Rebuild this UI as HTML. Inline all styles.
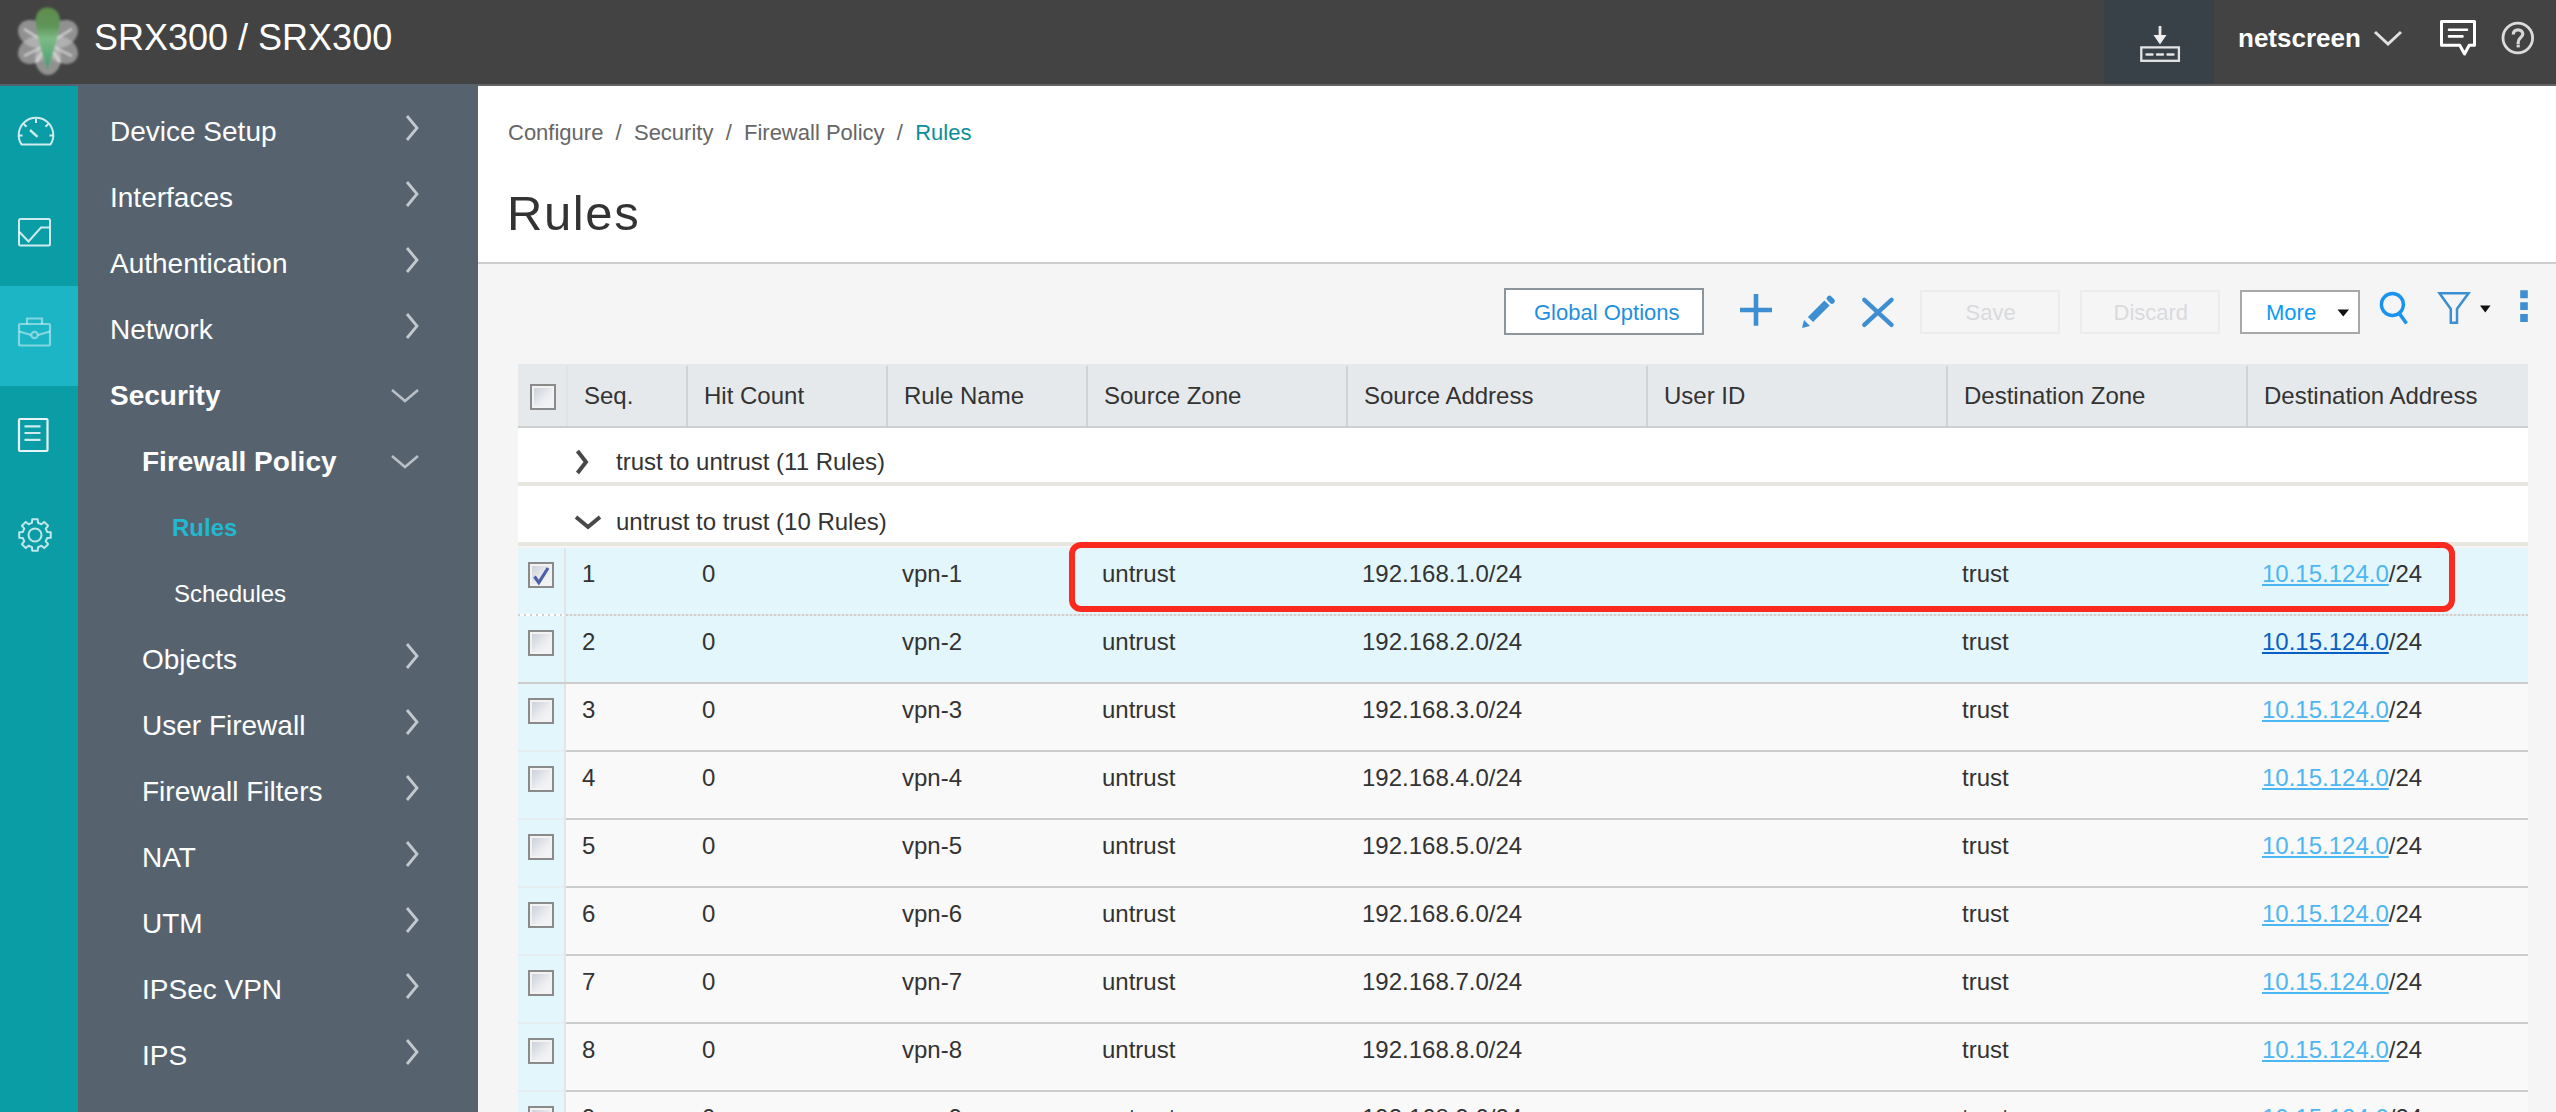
<!DOCTYPE html>
<html><head><meta charset="utf-8"><style>
*{box-sizing:border-box;margin:0;padding:0}
html,body{width:2556px;height:1112px;overflow:hidden;background:#f5f5f5;font-family:"Liberation Sans",sans-serif;color:#333}
.a{position:absolute;white-space:nowrap;line-height:1}
#hdr{position:absolute;left:0;top:0;width:2556px;height:84px;background:#434343}
#side{position:absolute;left:0;top:84px;width:478px;height:1028px;background:#56636f}
#rail{position:absolute;left:0;top:86px;width:78px;height:1026px;background:#0a9da6}
#nav{position:absolute;left:78px;top:99px;width:400px}
#nav .it{position:relative;height:66px;line-height:66px;font-size:28px;color:#fff;white-space:nowrap}
#nav .chev{position:absolute;left:328px;top:16px}
#topw{position:absolute;left:478px;top:84px;width:2078px;height:180px;background:#fff;border-top:2px solid #646464;border-bottom:2px solid #cfcfcf}
#tbl{position:absolute;left:518px;top:364px;width:2010px;height:748px;overflow:hidden}
.hd{position:absolute;left:0;top:0;width:2010px;height:64px;background:#e6e9eb;border-bottom:2px solid #cdcece}
.hd .dv{position:absolute;top:2px;width:2px;height:60px;background:#d0d3d5}
.cell{position:absolute;font-size:24px;line-height:1;white-space:nowrap;color:#333}
.grp{position:absolute;left:0;width:2010px;background:#fff;border-bottom:4px solid #e7e7e0}
.row{position:absolute;left:0;width:2010px;height:68px;background:#f9f9f9}
.row .bd{position:absolute;left:48px;right:0;bottom:0;height:2px;background:#cdcdcd}
.row .cbc{position:absolute;left:0;top:0;width:46px;height:68px;background:#e3f6fc}
.row .cdv{position:absolute;left:46px;top:0;width:2px;height:68px;background:#e2e5e6}
.row.sel{background:#e3f6fc}
.cb{position:absolute;width:26px;height:26px;border:2px solid #8a8a8a;background:linear-gradient(135deg,#c6ccd5 0%,#eceef1 60%,#f6f6f6 100%);box-shadow:inset 0 0 0 2px #f2f2f2}
.lnk{color:#4cb6f3;text-decoration:underline;text-decoration-thickness:2px;text-underline-offset:2px}
</style></head><body>
<div id="hdr">
<svg style="position:absolute;left:0;top:0" width="96" height="84" viewBox="0 0 96 84">
<defs>
<linearGradient id="lg" x1="0" y1="0" x2="0" y2="1"><stop offset="0" stop-color="#5e8c4c"/><stop offset="0.3" stop-color="#5f9459"/><stop offset="0.5" stop-color="#7dba86"/><stop offset="0.8" stop-color="#5aa878"/><stop offset="1" stop-color="#3f9a6a"/></linearGradient>
<filter id="bl"><feGaussianBlur stdDeviation="0.8"/></filter>
</defs>
<g filter="url(#bl)">
<g fill="#c4c4c4" fill-opacity="0.6">
<ellipse cx="48" cy="58" rx="13" ry="17"/>
<ellipse cx="48" cy="58" rx="13" ry="17" transform="rotate(60 48 42)"/>
<ellipse cx="48" cy="58" rx="13" ry="17" transform="rotate(120 48 42)"/>
<ellipse cx="48" cy="58" rx="13" ry="17" transform="rotate(-60 48 42)"/>
<ellipse cx="48" cy="58" rx="13" ry="17" transform="rotate(-120 48 42)"/>
</g>
<g stroke="#e6e6e6" stroke-opacity="0.7" stroke-width="2.5" fill="none">
<path d="M24 29 L48 44 L24 56"/><path d="M72 29 L48 44 L72 56"/>
<path d="M36 62 L48 44 L60 62"/>
</g>
<path d="M47.5 7.5 C55 7.5 60 13 60 21 C60 33 52 57 47.5 70 C43 57 35.5 33 35.5 21 C35.5 13 40 7.5 47.5 7.5 Z" fill="url(#lg)"/>
</g></svg>
<div class="a" style="left:94px;top:20px;font-size:36px;color:#fff">SRX300 / SRX300</div>

<div style="position:absolute;left:2104px;top:0;width:110px;height:84px;background:#374147"></div>
<svg style="position:absolute;left:2130px;top:20px" width="60" height="50" viewBox="2130 20 60 50">
<path d="M2160 26 L2160 40" stroke="#e8e8e8" stroke-width="2.8"/>
<path d="M2153.5 35 L2160 44.5 L2166.5 35 Z" fill="#f0f0f0"/>
<rect x="2141.3" y="47.4" width="37.6" height="13.4" fill="none" stroke="#e4e4e4" stroke-width="2.3"/>
<path d="M2146.5 54.5 H2152.5 M2157 54.5 H2163 M2167.5 54.5 H2173.5" stroke="#e4e4e4" stroke-width="2.4" stroke-linecap="round"/>
</svg>
<div class="a" style="left:2238px;top:25px;font-size:26px;font-weight:bold;color:#fff">netscreen</div>
<svg style="position:absolute;left:2370px;top:26px" width="36" height="24" viewBox="2370 26 36 24"><path d="M2375 32 L2388 44 L2401 32" fill="none" stroke="#e0e0e0" stroke-width="3"/></svg>
<svg style="position:absolute;left:2436px;top:16px" width="44" height="44" viewBox="2436 16 44 44">
<path d="M2441.5 21.6 H2474.5 V45.2 H2469.2 L2464.5 54 L2459.8 45.2 H2441.5 Z" fill="none" stroke="#fff" stroke-width="3" stroke-linejoin="round"/>
<path d="M2449 29.8 H2467 M2449 36.4 H2462.5" stroke="#fff" stroke-width="2.6" stroke-linecap="round"/>
</svg>
<svg style="position:absolute;left:2498px;top:18px" width="40" height="40" viewBox="2498 18 40 40">
<circle cx="2517.8" cy="38" r="14.8" fill="none" stroke="#dcdcdc" stroke-width="2.8"/>
<path d="M2513.3 34.5 C2513.3 31.5 2515.3 29.8 2518 29.8 C2520.8 29.8 2522.8 31.6 2522.8 34 C2522.8 37.2 2518.2 38 2518.2 42.5 V44" fill="none" stroke="#d8d8d8" stroke-width="3.2"/>
<rect x="2516.6" y="44.6" width="3.2" height="2.8" fill="#d8d8d8"/>
</svg>

</div>
<div id="side"></div>
<div id="rail"><div style="position:absolute;left:0;top:200px;width:78px;height:100px;background:#1cb5c5"></div></div>
<div id="nav">
<div class="it" style="padding-left:32px;font-size:28px;color:#fff;">Device Setup<svg class="chev" style="left:326px;top:14.5px" width="16" height="28" viewBox="0 0 16 28"><path d="M3 2 L13 14 L3 26" fill="none" stroke="#c3c8cd" stroke-width="2.8"/></svg></div>
<div class="it" style="padding-left:32px;font-size:28px;color:#fff;">Interfaces<svg class="chev" style="left:326px;top:14.5px" width="16" height="28" viewBox="0 0 16 28"><path d="M3 2 L13 14 L3 26" fill="none" stroke="#c3c8cd" stroke-width="2.8"/></svg></div>
<div class="it" style="padding-left:32px;font-size:28px;color:#fff;">Authentication<svg class="chev" style="left:326px;top:14.5px" width="16" height="28" viewBox="0 0 16 28"><path d="M3 2 L13 14 L3 26" fill="none" stroke="#c3c8cd" stroke-width="2.8"/></svg></div>
<div class="it" style="padding-left:32px;font-size:28px;color:#fff;">Network<svg class="chev" style="left:326px;top:14.5px" width="16" height="28" viewBox="0 0 16 28"><path d="M3 2 L13 14 L3 26" fill="none" stroke="#c3c8cd" stroke-width="2.8"/></svg></div>
<div class="it" style="padding-left:32px;font-size:28px;color:#fff;font-weight:bold;">Security<svg class="chev" style="left:312px;top:24px" width="30" height="16" viewBox="0 0 30 16"><path d="M2 3 L15 14 L28 3" fill="none" stroke="#b9bfc5" stroke-width="2.6"/></svg></div>
<div class="it" style="padding-left:64px;font-size:28px;color:#fff;font-weight:bold;">Firewall Policy<svg class="chev" style="left:312px;top:24px" width="30" height="16" viewBox="0 0 30 16"><path d="M2 3 L15 14 L28 3" fill="none" stroke="#b9bfc5" stroke-width="2.6"/></svg></div>
<div class="it" style="padding-left:94px;font-size:24px;color:#22b8cf;font-weight:bold;">Rules</div>
<div class="it" style="padding-left:96px;font-size:24px;color:#fff;">Schedules</div>
<div class="it" style="padding-left:64px;font-size:28px;color:#fff;">Objects<svg class="chev" style="left:326px;top:14.5px" width="16" height="28" viewBox="0 0 16 28"><path d="M3 2 L13 14 L3 26" fill="none" stroke="#c3c8cd" stroke-width="2.8"/></svg></div>
<div class="it" style="padding-left:64px;font-size:28px;color:#fff;">User Firewall<svg class="chev" style="left:326px;top:14.5px" width="16" height="28" viewBox="0 0 16 28"><path d="M3 2 L13 14 L3 26" fill="none" stroke="#c3c8cd" stroke-width="2.8"/></svg></div>
<div class="it" style="padding-left:64px;font-size:28px;color:#fff;">Firewall Filters<svg class="chev" style="left:326px;top:14.5px" width="16" height="28" viewBox="0 0 16 28"><path d="M3 2 L13 14 L3 26" fill="none" stroke="#c3c8cd" stroke-width="2.8"/></svg></div>
<div class="it" style="padding-left:64px;font-size:28px;color:#fff;">NAT<svg class="chev" style="left:326px;top:14.5px" width="16" height="28" viewBox="0 0 16 28"><path d="M3 2 L13 14 L3 26" fill="none" stroke="#c3c8cd" stroke-width="2.8"/></svg></div>
<div class="it" style="padding-left:64px;font-size:28px;color:#fff;">UTM<svg class="chev" style="left:326px;top:14.5px" width="16" height="28" viewBox="0 0 16 28"><path d="M3 2 L13 14 L3 26" fill="none" stroke="#c3c8cd" stroke-width="2.8"/></svg></div>
<div class="it" style="padding-left:64px;font-size:28px;color:#fff;">IPSec VPN<svg class="chev" style="left:326px;top:14.5px" width="16" height="28" viewBox="0 0 16 28"><path d="M3 2 L13 14 L3 26" fill="none" stroke="#c3c8cd" stroke-width="2.8"/></svg></div>
<div class="it" style="padding-left:64px;font-size:28px;color:#fff;">IPS<svg class="chev" style="left:326px;top:14.5px" width="16" height="28" viewBox="0 0 16 28"><path d="M3 2 L13 14 L3 26" fill="none" stroke="#c3c8cd" stroke-width="2.8"/></svg></div>
<div class="it" style="padding-left:64px;font-size:28px;color:#fff;">ALG</div>
</div>
<div id="topw"></div>
<div class="a" style="left:508px;top:122px;font-size:22px;color:#666;white-space:pre">Configure  /  Security  /  Firewall Policy  /  <span style="color:#0b8e99">Rules</span></div>
<div class="a" style="left:507px;top:189px;font-size:49px;letter-spacing:1.6px;color:#333">Rules</div>
<div id="tbl">
<div class="hd">
<div class="dv" style="left:48px;background:#e1e4e6"></div>
<div class="dv" style="left:168px"></div>
<div class="dv" style="left:368px"></div>
<div class="dv" style="left:568px"></div>
<div class="dv" style="left:828px"></div>
<div class="dv" style="left:1128px"></div>
<div class="dv" style="left:1428px"></div>
<div class="dv" style="left:1728px"></div>
<div class="cell" style="left:66px;top:20px">Seq.</div>
<div class="cell" style="left:186px;top:20px">Hit Count</div>
<div class="cell" style="left:386px;top:20px">Rule Name</div>
<div class="cell" style="left:586px;top:20px">Source Zone</div>
<div class="cell" style="left:846px;top:20px">Source Address</div>
<div class="cell" style="left:1146px;top:20px">User ID</div>
<div class="cell" style="left:1446px;top:20px">Destination Zone</div>
<div class="cell" style="left:1746px;top:20px">Destination Address</div>
<div class="cb" style="left:12px;top:20px"></div>
</div>
<div class="grp" style="top:64px;height:58px"></div>
<svg style="position:absolute;left:56px;top:85px" width="16" height="28" viewBox="0 0 16 28"><path d="M3.5 2 L12 13 L3.5 24" fill="none" stroke="#484848" stroke-width="4"/></svg>
<div class="cell" style="left:98px;top:86px">trust to untrust (11 Rules)</div>
<div class="grp" style="top:122px;height:60px"></div>
<svg style="position:absolute;left:56px;top:150px" width="28" height="16" viewBox="0 0 28 16"><path d="M2 3 L14 13 L26 3" fill="none" stroke="#484848" stroke-width="4"/></svg>
<div class="cell" style="left:98px;top:146px">untrust to trust (10 Rules)</div>
<div class="row sel" style="top:184px">
<div class="cbc"></div><div class="cdv"></div>
<div style="position:absolute;left:48px;right:0;bottom:0;height:2px;background:repeating-linear-gradient(90deg,#cfcfcf 0 2px,#e6e6e6 2px 4px)"></div>
<div style="position:absolute;left:0;width:46px;bottom:0;height:2px;background:repeating-linear-gradient(90deg,#d0d0d0 0 2px,#fff 2px 6px)"></div>
<div class="cb" style="left:10px;top:14px"></div>
<svg style="position:absolute;left:14px;top:18px" width="20" height="20" viewBox="0 0 20 20"><path d="M2.5 10.5 L6.8 16.6 L16 2" fill="none" stroke="#4c5fa9" stroke-width="3.2" stroke-linejoin="miter"/></svg>
<div class="cell" style="left:64px;top:14px">1</div>
<div class="cell" style="left:184px;top:14px">0</div>
<div class="cell" style="left:384px;top:14px">vpn-1</div>
<div class="cell" style="left:584px;top:14px">untrust</div>
<div class="cell" style="left:844px;top:14px">192.168.1.0/24</div>
<div class="cell" style="left:1444px;top:14px">trust</div>
<div class="cell" style="left:1744px;top:14px"><span class="lnk" style="color:#4cb6f3">10.15.124.0</span>/24</div>
</div>
<div class="row sel" style="top:252px">
<div class="cbc"></div><div class="cdv"></div>
<div class="bd" style="left:0"></div>
<div class="cb" style="left:10px;top:14px"></div>
<div class="cell" style="left:64px;top:14px">2</div>
<div class="cell" style="left:184px;top:14px">0</div>
<div class="cell" style="left:384px;top:14px">vpn-2</div>
<div class="cell" style="left:584px;top:14px">untrust</div>
<div class="cell" style="left:844px;top:14px">192.168.2.0/24</div>
<div class="cell" style="left:1444px;top:14px">trust</div>
<div class="cell" style="left:1744px;top:14px"><span class="lnk" style="color:#0a5fc4">10.15.124.0</span>/24</div>
</div>
<div class="row" style="top:320px">
<div class="cbc"></div><div class="cdv"></div>
<div class="bd"></div><div style="position:absolute;left:0;width:46px;bottom:0;height:2px;background:#e6eef1"></div>
<div class="cb" style="left:10px;top:14px"></div>
<div class="cell" style="left:64px;top:14px">3</div>
<div class="cell" style="left:184px;top:14px">0</div>
<div class="cell" style="left:384px;top:14px">vpn-3</div>
<div class="cell" style="left:584px;top:14px">untrust</div>
<div class="cell" style="left:844px;top:14px">192.168.3.0/24</div>
<div class="cell" style="left:1444px;top:14px">trust</div>
<div class="cell" style="left:1744px;top:14px"><span class="lnk" style="color:#4cb6f3">10.15.124.0</span>/24</div>
</div>
<div class="row" style="top:388px">
<div class="cbc"></div><div class="cdv"></div>
<div class="bd"></div><div style="position:absolute;left:0;width:46px;bottom:0;height:2px;background:#e6eef1"></div>
<div class="cb" style="left:10px;top:14px"></div>
<div class="cell" style="left:64px;top:14px">4</div>
<div class="cell" style="left:184px;top:14px">0</div>
<div class="cell" style="left:384px;top:14px">vpn-4</div>
<div class="cell" style="left:584px;top:14px">untrust</div>
<div class="cell" style="left:844px;top:14px">192.168.4.0/24</div>
<div class="cell" style="left:1444px;top:14px">trust</div>
<div class="cell" style="left:1744px;top:14px"><span class="lnk" style="color:#4cb6f3">10.15.124.0</span>/24</div>
</div>
<div class="row" style="top:456px">
<div class="cbc"></div><div class="cdv"></div>
<div class="bd"></div><div style="position:absolute;left:0;width:46px;bottom:0;height:2px;background:#e6eef1"></div>
<div class="cb" style="left:10px;top:14px"></div>
<div class="cell" style="left:64px;top:14px">5</div>
<div class="cell" style="left:184px;top:14px">0</div>
<div class="cell" style="left:384px;top:14px">vpn-5</div>
<div class="cell" style="left:584px;top:14px">untrust</div>
<div class="cell" style="left:844px;top:14px">192.168.5.0/24</div>
<div class="cell" style="left:1444px;top:14px">trust</div>
<div class="cell" style="left:1744px;top:14px"><span class="lnk" style="color:#4cb6f3">10.15.124.0</span>/24</div>
</div>
<div class="row" style="top:524px">
<div class="cbc"></div><div class="cdv"></div>
<div class="bd"></div><div style="position:absolute;left:0;width:46px;bottom:0;height:2px;background:#e6eef1"></div>
<div class="cb" style="left:10px;top:14px"></div>
<div class="cell" style="left:64px;top:14px">6</div>
<div class="cell" style="left:184px;top:14px">0</div>
<div class="cell" style="left:384px;top:14px">vpn-6</div>
<div class="cell" style="left:584px;top:14px">untrust</div>
<div class="cell" style="left:844px;top:14px">192.168.6.0/24</div>
<div class="cell" style="left:1444px;top:14px">trust</div>
<div class="cell" style="left:1744px;top:14px"><span class="lnk" style="color:#4cb6f3">10.15.124.0</span>/24</div>
</div>
<div class="row" style="top:592px">
<div class="cbc"></div><div class="cdv"></div>
<div class="bd"></div><div style="position:absolute;left:0;width:46px;bottom:0;height:2px;background:#e6eef1"></div>
<div class="cb" style="left:10px;top:14px"></div>
<div class="cell" style="left:64px;top:14px">7</div>
<div class="cell" style="left:184px;top:14px">0</div>
<div class="cell" style="left:384px;top:14px">vpn-7</div>
<div class="cell" style="left:584px;top:14px">untrust</div>
<div class="cell" style="left:844px;top:14px">192.168.7.0/24</div>
<div class="cell" style="left:1444px;top:14px">trust</div>
<div class="cell" style="left:1744px;top:14px"><span class="lnk" style="color:#4cb6f3">10.15.124.0</span>/24</div>
</div>
<div class="row" style="top:660px">
<div class="cbc"></div><div class="cdv"></div>
<div class="bd"></div><div style="position:absolute;left:0;width:46px;bottom:0;height:2px;background:#e6eef1"></div>
<div class="cb" style="left:10px;top:14px"></div>
<div class="cell" style="left:64px;top:14px">8</div>
<div class="cell" style="left:184px;top:14px">0</div>
<div class="cell" style="left:384px;top:14px">vpn-8</div>
<div class="cell" style="left:584px;top:14px">untrust</div>
<div class="cell" style="left:844px;top:14px">192.168.8.0/24</div>
<div class="cell" style="left:1444px;top:14px">trust</div>
<div class="cell" style="left:1744px;top:14px"><span class="lnk" style="color:#4cb6f3">10.15.124.0</span>/24</div>
</div>
<div class="row" style="top:728px">
<div class="cbc"></div><div class="cdv"></div>
<div class="bd"></div><div style="position:absolute;left:0;width:46px;bottom:0;height:2px;background:#e6eef1"></div>
<div class="cb" style="left:10px;top:14px"></div>
<div class="cell" style="left:64px;top:14px">9</div>
<div class="cell" style="left:184px;top:14px">0</div>
<div class="cell" style="left:384px;top:14px">vpn-9</div>
<div class="cell" style="left:584px;top:14px">untrust</div>
<div class="cell" style="left:844px;top:14px">192.168.9.0/24</div>
<div class="cell" style="left:1444px;top:14px">trust</div>
<div class="cell" style="left:1744px;top:14px"><span class="lnk" style="color:#4cb6f3">10.15.124.0</span>/24</div>
</div>
</div>

<svg style="position:absolute;left:0;top:86px" width="78" height="500" viewBox="0 86 78 500" fill="none" stroke="#fff" stroke-width="2.2">
<g stroke-opacity="0.8" stroke-width="2">
<path d="M21.5 144.5 A17.3 17.3 0 1 1 50.5 144.5 Z" stroke-linejoin="round"/>
<path d="M36 119 V123 M23.8 124 L26.5 126.7 M48.2 124 L45.5 126.7 M19 135.5 H22.5 M53 135.5 H49.5" />
<path d="M30 130 L37.5 136.8" stroke-width="2.4"/>
</g>
<g stroke-opacity="0.8" stroke-width="2">
<rect x="19" y="219" width="31" height="26.5" rx="1.5"/>
<path d="M19 231.5 L28.5 241.5 L41 227.5 H50"/>
</g>
<g stroke-opacity="0.45">
<rect x="19" y="324" width="31" height="21.5" rx="1"/>
<path d="M27 324 V318.5 H42 V324"/>
<path d="M19 331.5 L31 335 M38 335 L50 331.5"/>
<circle cx="34.5" cy="335" r="3.2"/>
</g>
<g stroke-opacity="0.9">
<rect x="19" y="419" width="28.5" height="32" rx="1"/>
<path d="M24.5 426.3 H40.5 M24.5 433 H40.5 M24.5 439.8 H40.5" stroke-opacity="0.8"/>
</g>
<g stroke-opacity="0.75" stroke-width="2">
<path d="M31.93 522.88 L32.25 519.24 L37.75 519.24 L38.07 522.88 L41.39 524.26 L44.20 521.91 L48.09 525.80 L45.74 528.61 L47.12 531.93 L50.76 532.25 L50.76 537.75 L47.12 538.07 L45.74 541.39 L48.09 544.20 L44.20 548.09 L41.39 545.74 L38.07 547.12 L37.75 550.76 L32.25 550.76 L31.93 547.12 L28.61 545.74 L25.80 548.09 L21.91 544.20 L24.26 541.39 L22.88 538.07 L19.24 537.75 L19.24 532.25 L22.88 531.93 L24.26 528.61 L21.91 525.80 L25.80 521.91 L28.61 524.26 Z" stroke-linejoin="round"/>
<circle cx="35" cy="535" r="6.5"/>
</g>
</svg>


<div style="position:absolute;left:1504px;top:288px;width:200px;height:47px;background:#fff;border:2px solid #8c959b"></div>
<div class="a" style="left:1534px;top:302px;font-size:22px;color:#1e8fe0">Global Options</div>
<svg style="position:absolute;left:1730px;top:285px" width="180" height="50" viewBox="1730 285 180 50" fill="none" stroke="#3d8fd1">
<path d="M1756 294 V325.7 M1740 310 H1772" stroke-width="4.6"/>
<path d="M1864.3 299.8 L1891.5 324.8 M1891.5 299.8 L1864.3 324.8" stroke-width="4.4" stroke-linecap="round"/>
<path d="M1810.5 319.5 L1827 303" stroke-width="7.4"/>
<path d="M1829.5 298.5 L1832 301" stroke-width="5.5" stroke-linecap="round"/>
<path d="M1802 328 L1804 320 L1810 326 Z" fill="#3d8fd1" stroke="none"/>
</svg>
<div style="position:absolute;left:1920px;top:290px;width:140px;height:44px;border:2px solid #ececec"></div>
<div class="a" style="left:1965.5px;top:302px;font-size:22px;color:#d9dadd">Save</div>
<div style="position:absolute;left:2080px;top:290px;width:140px;height:44px;border:2px solid #ececec"></div>
<div class="a" style="left:2113.5px;top:302px;font-size:22px;color:#d9dadd">Discard</div>
<div style="position:absolute;left:2240px;top:290px;width:120px;height:44px;background:#fff;border:2px solid #a8a8a8"></div>
<div class="a" style="left:2266px;top:302px;font-size:22px;color:#0a9af8">More</div>
<svg style="position:absolute;left:2330px;top:300px" width="230" height="40" viewBox="2330 300 230 40">
<path d="M2337.5 309.5 H2349 L2343.25 316.5 Z" fill="#111"/>
<path d="M2480 305.5 H2490.5 L2485.25 312.5 Z" fill="#111"/>
</svg>
<svg style="position:absolute;left:2370px;top:285px" width="170" height="45" viewBox="2370 285 170 45" fill="none">
<circle cx="2392.4" cy="304.5" r="11" stroke="#1a93f0" stroke-width="3.4"/>
<path d="M2399 313 L2406.5 323.5" stroke="#1a93f0" stroke-width="3.6"/>
<path d="M2439.5 293.2 H2468.5 L2457 309 V322.8 H2450.8 V309 Z" stroke="#3d8fd1" stroke-width="2.5" stroke-linejoin="miter"/>
<path d="M2524 290.2 V298.3 M2524 302.3 V310 M2524 314 V322" stroke="#3d8fd1" stroke-width="7.6"/>
</svg>

<div style="position:absolute;left:1069px;top:542px;width:1386px;height:70px;border:6px solid #fb2a1f;border-radius:12px"></div>
</body></html>
